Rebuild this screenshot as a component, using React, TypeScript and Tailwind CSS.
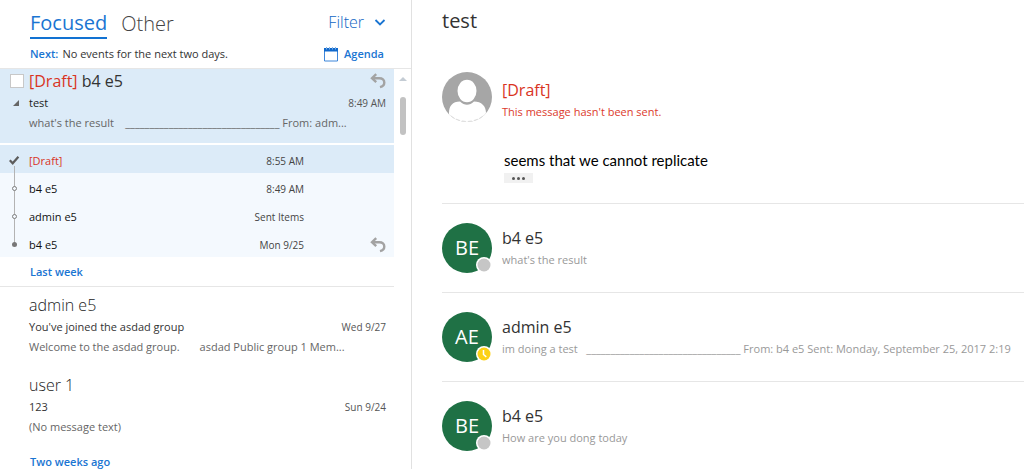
import { ReactNode } from "react";

const LINE = "_".repeat(32);

const thread = [
  { id: 1, name: "[Draft]", time: "8:55 AM", draft: true, replied: false },
  { id: 2, name: "b4 e5", time: "8:49 AM", draft: false, replied: false },
  { id: 3, name: "admin e5", time: "Sent Items", draft: false, replied: false },
  { id: 4, name: "b4 e5", time: "Mon 9/25", draft: false, replied: true },
];

const lastWeek = [
  {
    id: 1,
    from: "admin e5",
    subject: "You've joined the asdad group",
    date: "Wed 9/27",
    preview: "Welcome to the asdad group.       asdad Public group 1 Mem...",
  },
  { id: 2, from: "user 1", subject: "123", date: "Sun 9/24", preview: "(No message text)" },
];

const messages = [
  { id: 1, initials: "BE", from: "b4 e5", text: "what's the result", away: false },
  {
    id: 2,
    initials: "AE",
    from: "admin e5",
    text: `im doing a test   ${LINE} From: b4 e5 Sent: Monday, September 25, 2017 2:19`,
    away: true,
  },
  { id: 3, initials: "BE", from: "b4 e5", text: "How are you dong today", away: false },
];

function ReplyIcon() {
  return (
    <svg className="h-4 w-4 shrink-0" viewBox="0 0 16 16" fill="none" stroke="#a3a3a3" strokeWidth="2.4">
      <path d="M6.2 1.2 2 5.2l4.2 4" />
      <path d="M2.2 5.2h7.2c3 0 4.9 1.7 4.9 4.2 0 2.4-1.7 4-4.3 4.7" />
    </svg>
  );
}

function CalendarIcon() {
  return (
    <svg className="h-4 w-[14px]" viewBox="0 0 14 16">
      <path d="M.5 2.500h13v12.500H.5z" fill="#fff" stroke="#3d86da" />
      <path d="M0 2h14v3.500H0z" fill="#1169cc" />
      <path d="M2.500 1v2.500M5.500 1v2.500M8.500 1v2.500M11.500 1v2.500" stroke="#7fb2e8" />
    </svg>
  );
}

// dots and connecting line to the left of the expanded conversation
function Marker({ index, last }: { index: number; last: number }) {
  return (
    <svg className="h-7 w-7 shrink-0" viewBox="0 0 28 28" fill="none">
      {index === 0 && (
        <>
          <path d="M14.5 21v7" stroke="#b3b3b3" />
          <path d="m9.800 15.300 2.900 3 5.700-6.500" stroke="#5c5c5c" strokeWidth="2.2" />
        </>
      )}
      {index > 0 && index < last && (
        <>
          <path d="M14.5 0v28" stroke="#b3b3b3" />
          <circle cx="14.500" cy="15.500" r="2" fill="#f4f9fe" stroke="#7d7d7d" />
        </>
      )}
      {index === last && (
        <>
          <path d="M14.5 0v14" stroke="#b3b3b3" />
          <circle cx="14.500" cy="15.500" r="2.500" fill="#777" />
        </>
      )}
    </svg>
  );
}

function PersonAvatar() {
  return (
    <svg className="size-[50px] shrink-0" viewBox="0 0 50 50">
      <defs>
        <clipPath id="person">
          <circle cx="25" cy="25" r="25" />
        </clipPath>
      </defs>
      <g clipPath="url(#person)">
        <path d="M0 0h50v50H0z" fill="#a6a6a6" />
        <path
          d="M7 50V41c0-7 3.500-11.500 11-11.500 2.500 2.300 4.500 3.300 7 3.300s4.500-1 7-3.300c7.500 0 12 4.500 12 11.500v9z"
          fill="#fff"
        />
        <ellipse cx="25" cy="19" rx="10.500" ry="12" fill="#a6a6a6" />
        <ellipse cx="25" cy="19" rx="9.500" ry="11.200" fill="#fff" />
      </g>
      <path d="M9 44c9 7.300 23 7.300 32 0" fill="none" stroke="#dcdcdc" strokeDasharray="4 2" />
    </svg>
  );
}

function Avatar({ initials, away }: { initials: string; away: boolean }) {
  return (
    <div className="relative flex size-[50px] shrink-0 items-center justify-center rounded-full bg-[#1f7145] text-xl text-white">
      {initials}
      <svg className="absolute right-0 bottom-0 size-4" viewBox="0 0 16 16">
        <circle cx="8" cy="8" r="8" fill="#fff" />
        <circle cx="8" cy="8" r="6.500" fill={away ? "#fcd116" : "#c6c6c6"} />
        {away && <path d="M7.500 4v4.500l2.800 2.300" fill="none" stroke="#fff" strokeWidth="1.500" />}
      </svg>
    </div>
  );
}

function GroupHeader({ children }: { children: ReactNode }) {
  return (
    <h2 className="h-[30px] border-b border-[#e6e6e6] pl-[30px] leading-[30px] font-semibold text-[#1a75d2]">{children}</h2>
  );
}

export default function App() {
  return (
    <div className="flex h-screen overflow-hidden bg-white font-['Open_Sans','Noto_Sans',sans-serif] text-[11px] text-[#333]">
      {/* Message list */}
      <section className="flex w-[412px] shrink-0 flex-col border-r border-[#e1e1e1]">
        <header className="border-b border-[#e6e6e6]">
          <div className="flex items-start pt-2 pr-[25px] pl-[30px]">
            <button className="h-[31px] border-b-2 border-[#1272d2] text-xl leading-7 text-[#1a75d2]">Focused</button>
            <button className="ml-[14px] text-xl leading-8 font-light text-[#444]">Other</button>
            <button className="ml-auto flex items-center gap-2.5 text-base leading-7 font-light text-[#0f66c4]">
              Filter
              <svg className="h-3 w-3" viewBox="0 0 12 12" fill="none" stroke="#1a75d2" strokeWidth="1.8">
                <path d="m1.500 4 4.500 4.500L10.500 4" />
              </svg>
            </button>
          </div>
          <div className="flex h-7 items-center pr-[27px] pl-[30px]">
            <span className="font-semibold text-[#1a75d2]">Next:</span>
            <span className="pl-1">No events for the next two days.</span>
            <button className="ml-auto flex items-center gap-1.5 font-semibold text-[#1a75d2]">
              <CalendarIcon />
              Agenda
            </button>
          </div>
        </header>

        <div className="flex min-h-0 flex-1">
          <div className="min-w-0 flex-1 overflow-hidden">
            <article className="h-[74px] bg-[#dcebf8] pr-2">
              <div className="flex h-6 items-center pl-2.5">
                <input
                  type="checkbox"
                  aria-label="Select conversation"
                  className="size-[14px] appearance-none border border-[#c8c8c8] bg-white"
                />
                <h3 className="pl-[5px] text-base">
                  <span className="text-[#d9341f]">[Draft]</span> b4 e5
                </h3>
                <span className="ml-auto">
                  <ReplyIcon />
                </span>
              </div>
              <div className="flex h-5 items-center">
                <button aria-label="Collapse conversation" className="flex w-[29px] pl-3">
                  <svg className="h-2 w-2" viewBox="0 0 8 8">
                    <path d="M7 1v6H1z" fill="#666" />
                  </svg>
                </button>
                <span className="text-[#222]">test</span>
                <time className="ml-auto text-[10px] text-[#555]">8:49 AM</time>
              </div>
              <p className="pl-[29px] leading-5 whitespace-pre text-[#666]">{`what's the result    ${LINE} From: adm...`}</p>
            </article>

            <ul className="mt-0.5">
              {thread.map((m, i) => (
                <li key={m.id} className={`flex h-7 items-center pr-2 ${m.draft ? "bg-[#dcebf8]" : "bg-[#f4f9fe]"}`}>
                  <Marker index={i} last={thread.length - 1} />
                  <span className={`flex-1 pt-1 pl-px ${m.draft ? "text-[#d9341f]" : "text-[#111]"}`}>{m.name}</span>
                  <time className="pt-1 text-[10px] text-[#444]">{m.time}</time>
                  <span className="flex w-[82px] justify-end pt-1">{m.replied && <ReplyIcon />}</span>
                </li>
              ))}
            </ul>

            <GroupHeader>Last week</GroupHeader>
            {lastWeek.map((m) => (
              <article key={m.id} className="h-20 pt-1.5 pr-2 pl-[29px]">
                <h3 className="text-base leading-6 font-light text-[#222]">{m.from}</h3>
                <div className="flex h-5 items-center">
                  <span>{m.subject}</span>
                  <time className="ml-auto text-[10px] text-[#555]">{m.date}</time>
                </div>
                <p className="leading-5 whitespace-pre text-[#666]">{m.preview}</p>
              </article>
            ))}
            <GroupHeader>Two weeks ago</GroupHeader>
          </div>

          {/* Scrollbar */}
          <div className="flex w-[17px] flex-col items-center pt-1.5">
            <svg className="h-2 w-2" viewBox="0 0 8 8">
              <path d="M4 2 8 6H0z" fill="#c4ccd4" />
            </svg>
            <div className="mt-3.5 h-[38px] w-1.5 rounded-full bg-[#c2c2c2]" />
          </div>
        </div>
      </section>

      {/* Reading pane */}
      <main className="min-w-0 flex-1 overflow-hidden pl-[30px]">
        <h1 className="pt-1.5 text-xl leading-[30px]">test</h1>

        <article className="pt-9">
          <div className="flex gap-2.5">
            <PersonAvatar />
            <div className="pt-1.5">
              <h2 className="text-base leading-6 text-[#d9341f]">[Draft]</h2>
              <p className="leading-5 text-[#dc3a2c]">This message hasn't been sent.</p>
            </div>
          </div>
          <div className="h-[81px] pt-[26px] pl-[62px]">
            <p className="font-['Lato',sans-serif] text-[15px] leading-6 text-black">seems that we cannot replicate</p>
            <button aria-label="Show message history" className="mt-px flex h-2.5 w-[29px] items-center justify-center gap-0.5 bg-[#f1f1f1]">
              <span className="size-[3px] rounded-full bg-[#555]" />
              <span className="size-[3px] rounded-full bg-[#555]" />
              <span className="size-[3px] rounded-full bg-[#555]" />
            </button>
          </div>
        </article>

        {messages.map((m) => (
          <article key={m.id} className="flex gap-2.5 border-t border-[#e6e6e6] py-[19px]">
            <Avatar initials={m.initials} away={m.away} />
            <div className="min-w-0 pt-[3px]">
              <h2 className="text-base leading-6">{m.from}</h2>
              <p className="leading-5 whitespace-pre text-[#999]">{m.text}</p>
            </div>
          </article>
        ))}
      </main>
    </div>
  );
}
